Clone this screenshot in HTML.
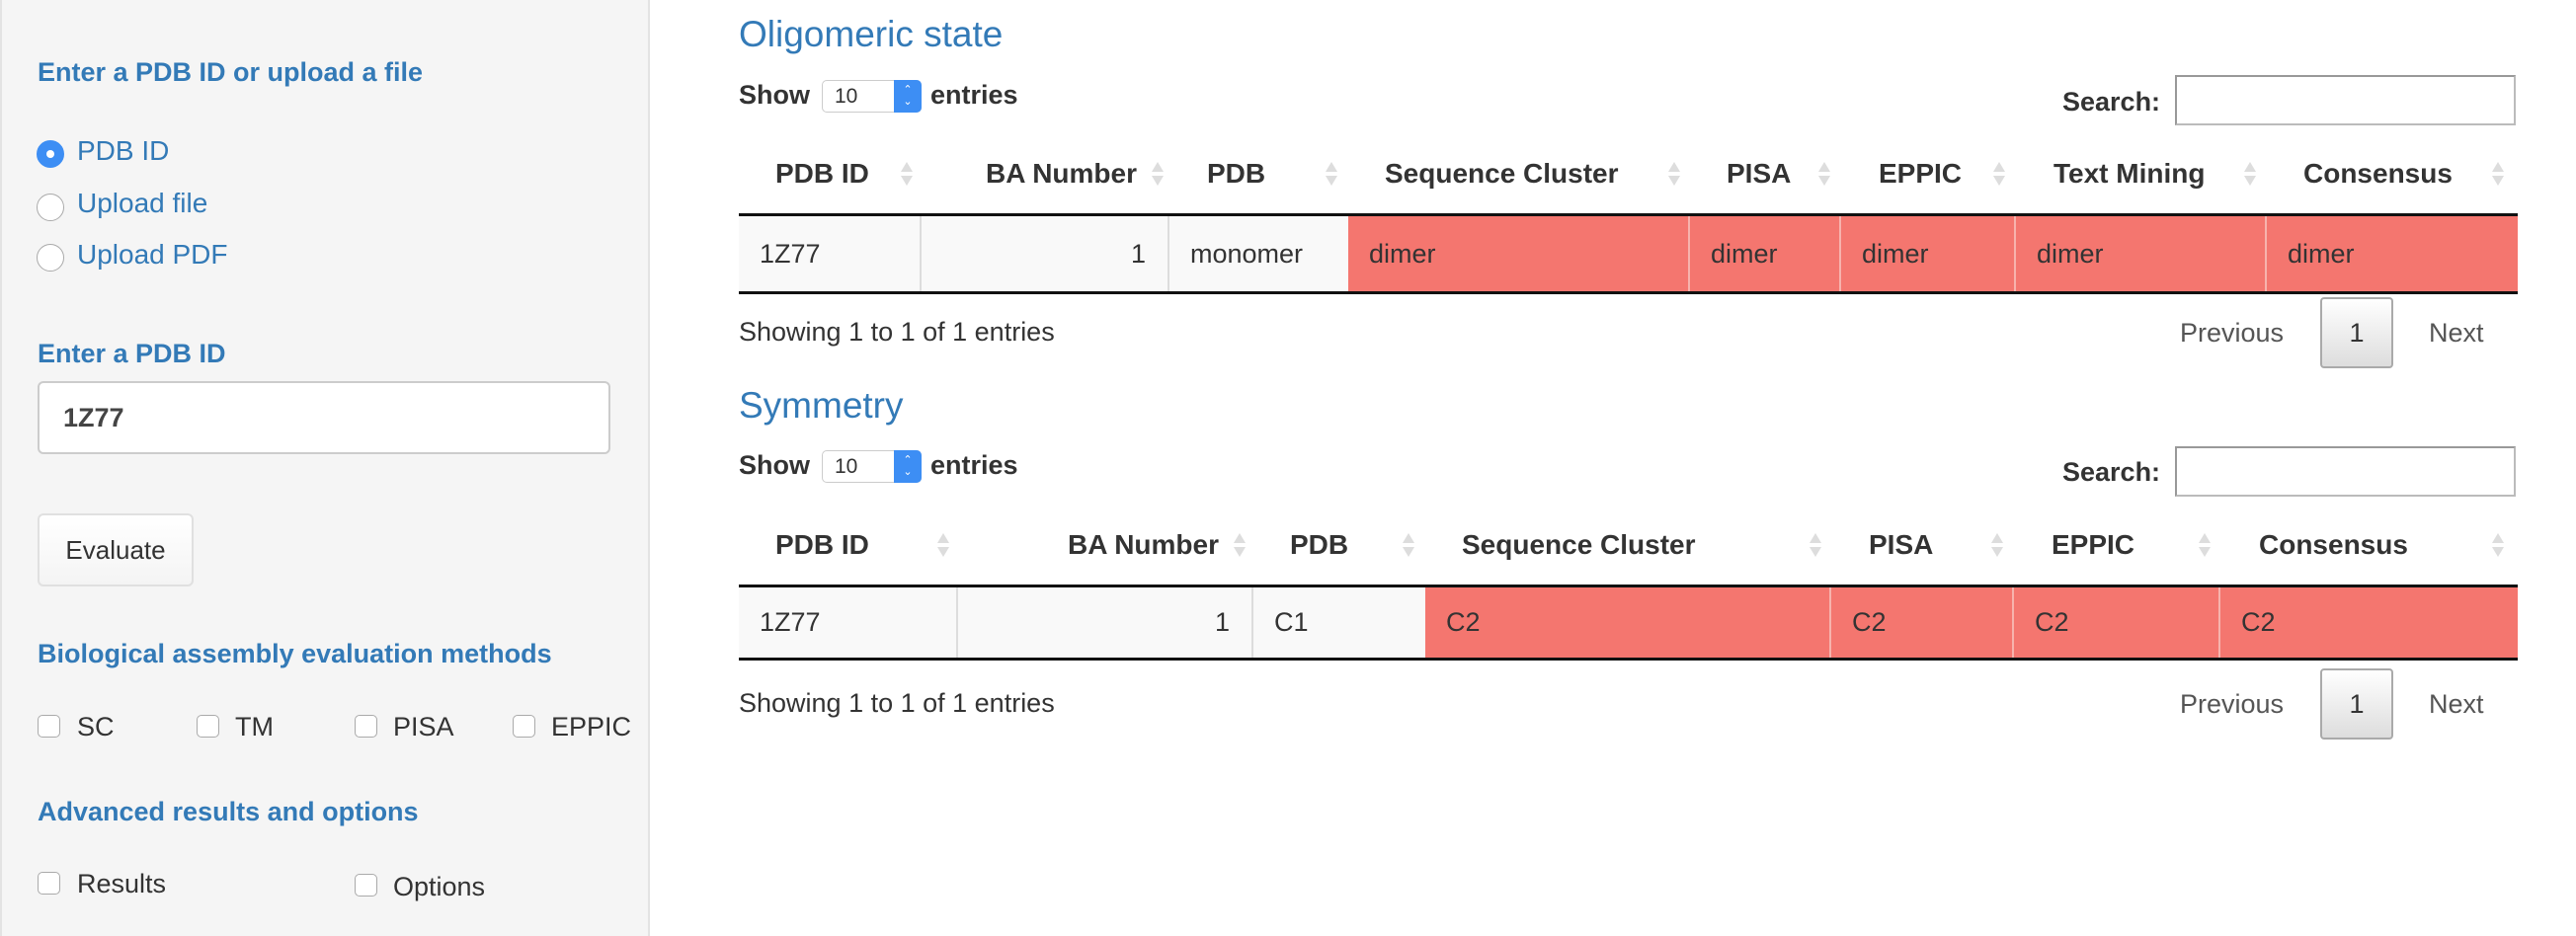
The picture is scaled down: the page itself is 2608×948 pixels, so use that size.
<!DOCTYPE html>
<html><head><meta charset="utf-8"><style>
*{box-sizing:border-box;margin:0;padding:0}
html,body{width:2608px;height:948px;overflow:hidden}
body{background:#fff;font-family:"Liberation Sans",Arial,sans-serif;color:#333;position:relative}
.a{position:absolute;white-space:nowrap}
.side{position:absolute;left:0;top:-8px;width:658px;height:980px;background:#f5f5f5;border:2px solid #e3e3e3;border-radius:8px}
.lbl{font-weight:bold;font-size:27px;color:#337ab7;line-height:32px}
.rl{font-size:28px;color:#337ab7;line-height:32px}
.radio{position:absolute;width:28px;height:28px;border-radius:50%;border:1px solid #aaa;background:#fff}
.cb{position:absolute;width:23px;height:23px;border-radius:5px;border:1px solid #aaa;background:#fff}
.cl{font-size:27px;line-height:32px;color:#333}
.h{font-size:37px;color:#337ab7;line-height:42px}
.b{font-weight:bold;font-size:27px;line-height:32px;color:#333}
.t{font-size:27px;line-height:32px;color:#333}
.sel{position:absolute;width:101px;height:33px;border:1px solid #ccc;border-radius:5px;background:#fff;font-size:21px;line-height:31px;padding-left:12px}
.sel i{position:absolute;right:-1px;top:-1px;width:28px;height:33px;background:#3d8ef4;border-radius:0 5px 5px 0;color:#fff;font-style:normal;font-size:11px;line-height:12px;text-align:center;padding-top:4px}
.srch{position:absolute;width:345px;height:51px;border:2px solid #bbb;border-top-color:#999;border-left-color:#999;background:#fff}
.hdr{position:absolute;font-weight:bold;font-size:28px;line-height:32px;color:#333;white-space:nowrap}
.arr{position:absolute;width:12px;height:30px}
.arr:before{content:"";position:absolute;left:0;top:3px;border-left:6px solid transparent;border-right:6px solid transparent;border-bottom:10px solid #ddd}
.arr:after{content:"";position:absolute;left:0;top:17px;border-left:6px solid transparent;border-right:6px solid transparent;border-top:10px solid #ddd}
.row{position:absolute;border-top:3px solid #111;border-bottom:3px solid #111}
.c{position:absolute;top:0;bottom:0;font-size:27px;color:#333;padding-left:21px;display:flex;align-items:center}
.g{background:#f9f9f9;border-right:2px solid #ddd}
.r{background:#f4766f;border-right:2px solid #f7b3ad}
.pg{position:absolute;font-size:27px;color:#555;line-height:32px}
.pbtn{position:absolute;width:74px;height:72px;border:2px solid #aaa;border-radius:4px;background:linear-gradient(#fff,#ddd);font-size:27px;text-align:center;line-height:68px;color:#333}
</style></head><body>
<div class="side"></div>
<div class="a lbl" style="left:38px;top:57px">Enter a PDB ID or upload a file</div>
<div class="radio" style="left:37px;top:142px;background:#3d8ef4;border-color:#3d8ef4"><div style="position:absolute;left:9px;top:9px;width:8px;height:8px;border-radius:50%;background:#fff"></div></div>
<div class="a rl" style="left:78px;top:137px">PDB ID</div>
<div class="radio" style="left:37px;top:196px"></div>
<div class="a rl" style="left:78px;top:190px">Upload file</div>
<div class="radio" style="left:37px;top:247px"></div>
<div class="a rl" style="left:78px;top:242px">Upload PDF</div>
<div class="a lbl" style="left:38px;top:342px">Enter a PDB ID</div>
<div class="a" style="left:38px;top:386px;width:580px;height:74px;background:#fff;border:2px solid #ccc;border-radius:6px;padding-left:24px;font-size:27px;line-height:70px;font-weight:bold;color:#444">1Z77</div>
<div class="a" style="left:38px;top:520px;width:158px;height:74px;background:linear-gradient(#fff,#f4f4f4);border:2px solid #e0e0e0;border-radius:6px;font-size:26px;line-height:70px;text-align:center;color:#333">Evaluate</div>
<div class="a lbl" style="left:38px;top:646px">Biological assembly evaluation methods</div>
<div class="cb" style="left:38px;top:724px"></div><div class="a cl" style="left:78px;top:720px">SC</div>
<div class="cb" style="left:199px;top:724px"></div><div class="a cl" style="left:238px;top:720px">TM</div>
<div class="cb" style="left:359px;top:724px"></div><div class="a cl" style="left:398px;top:720px">PISA</div>
<div class="cb" style="left:519px;top:724px"></div><div class="a cl" style="left:558px;top:720px">EPPIC</div>
<div class="a lbl" style="left:38px;top:806px">Advanced results and options</div>
<div class="cb" style="left:38px;top:883px"></div><div class="a cl" style="left:78px;top:879px">Results</div>
<div class="cb" style="left:359px;top:885px"></div><div class="a cl" style="left:398px;top:882px">Options</div>

<!-- table 1 -->
<div class="a h" style="left:748px;top:14px">Oligomeric state</div>
<div class="a b" style="left:748px;top:80px">Show</div>
<div class="sel" style="left:832px;top:81px">10<i>&#8963;<br>&#8964;</i></div>
<div class="a b" style="left:942px;top:80px">entries</div>
<div class="a b" style="left:2088px;top:87px">Search:</div>
<div class="srch" style="left:2202px;top:76px"></div>
<div class="hdr" style="left:785px;top:160px">PDB ID</div><div class="arr" style="left:912px;top:161px"></div>
<div class="hdr" style="left:851px;top:160px;width:300px;text-align:right">BA Number</div><div class="arr" style="left:1166px;top:161px"></div>
<div class="hdr" style="left:1222px;top:160px">PDB</div><div class="arr" style="left:1342px;top:161px"></div>
<div class="hdr" style="left:1402px;top:160px">Sequence Cluster</div><div class="arr" style="left:1689px;top:161px"></div>
<div class="hdr" style="left:1748px;top:160px">PISA</div><div class="arr" style="left:1841px;top:161px"></div>
<div class="hdr" style="left:1902px;top:160px">EPPIC</div><div class="arr" style="left:2018px;top:161px"></div>
<div class="hdr" style="left:2079px;top:160px">Text Mining</div><div class="arr" style="left:2272px;top:161px"></div>
<div class="hdr" style="left:2332px;top:160px">Consensus</div><div class="arr" style="left:2523px;top:161px"></div>
<div class="row" style="left:748px;top:216px;width:1801px;height:82px">
<div class="c g" style="left:0;width:185px">1Z77</div>
<div class="c g" style="left:185px;width:251px;justify-content:flex-end;padding-right:22px">1</div>
<div class="c g" style="left:436px;width:181px;border-right:none">monomer</div>
<div class="c r" style="left:617px;width:346px">dimer</div>
<div class="c r" style="left:963px;width:153px">dimer</div>
<div class="c r" style="left:1116px;width:177px">dimer</div>
<div class="c r" style="left:1293px;width:254px">dimer</div>
<div class="c r" style="left:1547px;width:254px;border-right:none">dimer</div>
</div>
<div class="a t" style="left:748px;top:320px">Showing 1 to 1 of 1 entries</div>
<div class="pg" style="left:2207px;top:321px">Previous</div>
<div class="pbtn" style="left:2349px;top:301px">1</div>
<div class="pg" style="left:2459px;top:321px">Next</div>

<!-- table 2 -->
<div class="a h" style="left:748px;top:390px">Symmetry</div>
<div class="a b" style="left:748px;top:455px">Show</div>
<div class="sel" style="left:832px;top:456px">10<i>&#8963;<br>&#8964;</i></div>
<div class="a b" style="left:942px;top:455px">entries</div>
<div class="a b" style="left:2088px;top:462px">Search:</div>
<div class="srch" style="left:2202px;top:452px"></div>
<div class="hdr" style="left:785px;top:536px">PDB ID</div><div class="arr" style="left:949px;top:537px"></div>
<div class="hdr" style="left:934px;top:536px;width:300px;text-align:right">BA Number</div><div class="arr" style="left:1249px;top:537px"></div>
<div class="hdr" style="left:1306px;top:536px">PDB</div><div class="arr" style="left:1420px;top:537px"></div>
<div class="hdr" style="left:1480px;top:536px">Sequence Cluster</div><div class="arr" style="left:1832px;top:537px"></div>
<div class="hdr" style="left:1892px;top:536px">PISA</div><div class="arr" style="left:2016px;top:537px"></div>
<div class="hdr" style="left:2077px;top:536px">EPPIC</div><div class="arr" style="left:2226px;top:537px"></div>
<div class="hdr" style="left:2287px;top:536px">Consensus</div><div class="arr" style="left:2523px;top:537px"></div>
<div class="row" style="left:748px;top:592px;width:1801px;height:77px">
<div class="c g" style="left:0;width:222px">1Z77</div>
<div class="c g" style="left:222px;width:299px;justify-content:flex-end;padding-right:22px">1</div>
<div class="c g" style="left:521px;width:174px;border-right:none">C1</div>
<div class="c r" style="left:695px;width:411px">C2</div>
<div class="c r" style="left:1106px;width:185px">C2</div>
<div class="c r" style="left:1291px;width:209px">C2</div>
<div class="c r" style="left:1500px;width:301px;border-right:none">C2</div>
</div>
<div class="a t" style="left:748px;top:696px">Showing 1 to 1 of 1 entries</div>
<div class="pg" style="left:2207px;top:697px">Previous</div>
<div class="pbtn" style="left:2349px;top:677px">1</div>
<div class="pg" style="left:2459px;top:697px">Next</div>
</body></html>
